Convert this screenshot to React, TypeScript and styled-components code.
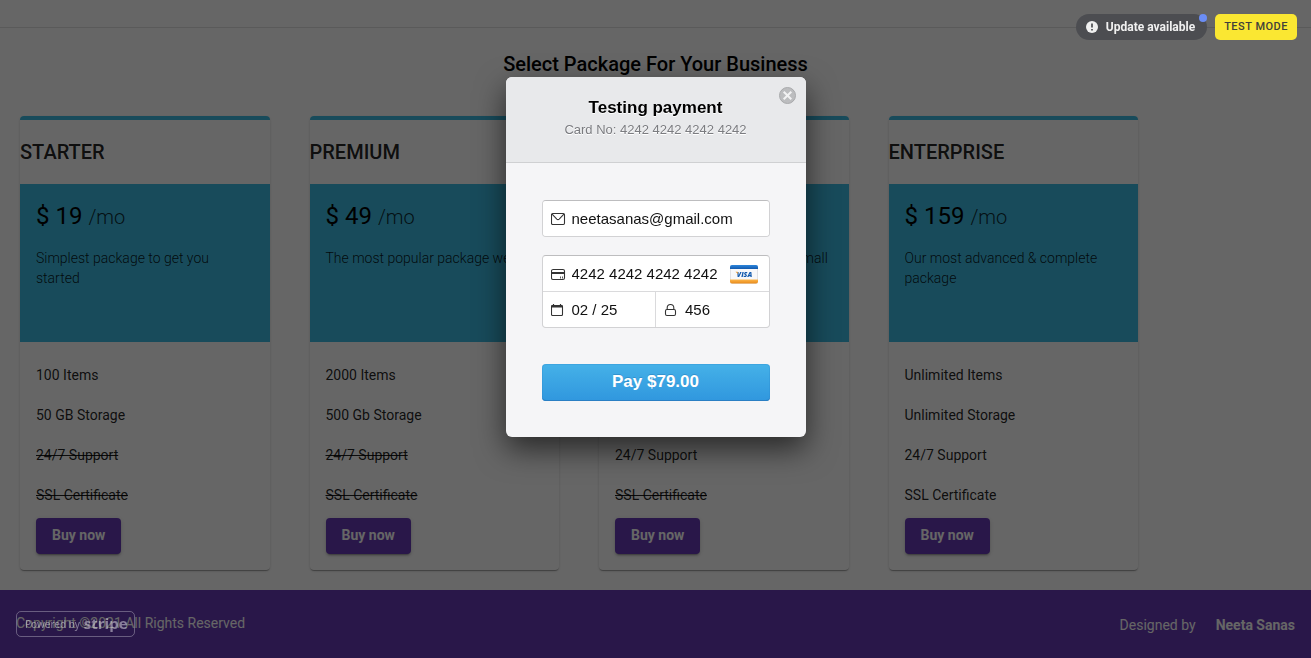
import React from "react";
import styled, { createGlobalStyle, css } from "styled-components";

const GlobalStyle = createGlobalStyle`
  *, *::before, *::after { box-sizing: border-box; }
  html, body, #root { min-height: 100vh; }
  body {
    margin: 0;
    background: #fff;
    color: rgba(0, 0, 0, 0.87);
    font-family: Roboto, "Liberation Sans", sans-serif;
    font-size: 14px;
    line-height: 20px;
  }
  h1, h2, p, ul { margin: 0; padding: 0; }
`;

/* ---------- Pricing page ---------- */

const Page = styled.div`
  display: flex;
  flex-direction: column;
  min-height: 100vh;
`;

const TopBar = styled.header`
  height: 28px;
  border-bottom: 1px solid #e0e0e0;
`;

const Main = styled.main`
  flex: 1;
  padding: 20px 0;
`;

const PageTitle = styled.h1`
  font-size: 20px;
  font-weight: 500;
  line-height: 32px;
  text-align: center;
  color: #000;
`;

const Plans = styled.section`
  display: grid;
  grid-template-columns: repeat(4, minmax(0, 1fr));
  gap: 40px;
  padding: 36px 173px 0 20px;
`;

const PlanCard = styled.article`
  display: flex;
  flex-direction: column;
  border-top: 4px solid #3cbce3;
  border-radius: 4px;
  box-shadow: 0 2px 1px -1px rgba(0, 0, 0, 0.2), 0 1px 1px rgba(0, 0, 0, 0.14),
    0 1px 3px rgba(0, 0, 0, 0.12);
`;

const PlanName = styled.h2`
  height: 64px;
  font-size: 20px;
  font-weight: 500;
  line-height: 64px;
`;

const PlanSummary = styled.div`
  height: 158px;
  padding: 16px;
  background: #3cbce3;
`;

const Price = styled.p`
  font-size: 24px;
  line-height: 32px;
  color: #000;
`;

const Period = styled.span`
  color: rgba(0, 0, 0, 0.8);
  font-size: 20px;
  font-weight: 300;
`;

const Description = styled.p`
  margin-top: 15px;
  font-weight: 300;
`;

const Features = styled.ul`
  padding: 13px 16px 0;
  list-style: none;
`;

const Feature = styled.li<{ $excluded: boolean }>`
  line-height: 40px;
  text-decoration: ${(p) => (p.$excluded ? "line-through" : "none")};
`;

const BuyButton = styled.button`
  align-self: flex-start;
  height: 36px;
  margin: 3px 16px 16px;
  padding: 0 16px 2px;
  border: 0;
  border-radius: 4px;
  background: #673ab7;
  color: #fff;
  font: 700 14px/34px Roboto, sans-serif;
  box-shadow: 0 3px 1px -2px rgba(0, 0, 0, 0.2), 0 2px 2px rgba(0, 0, 0, 0.14),
    0 1px 5px rgba(0, 0, 0, 0.12);
`;

const Footer = styled.footer`
  display: flex;
  align-items: center;
  justify-content: space-between;
  height: 68px;
  padding: 0 16px;
  background: #673ab7;
  color: #fff;
`;

const Copyright = styled.p`
  padding-bottom: 2px;
`;

const Credits = styled.div`
  display: flex;
  gap: 20px;
  padding-top: 2px;
`;

const AuthorLink = styled.a`
  color: inherit;
  font-weight: 700;
  text-decoration: none;
`;

/* ---------- Checkout overlay ---------- */

const Overlay = styled.div`
  position: fixed;
  inset: 0;
  display: flex;
  justify-content: center;
  align-items: flex-start;
  padding-top: 77px;
  background: rgba(0, 0, 0, 0.6);
  font-family: "Liberation Sans", Arial, sans-serif;
`;

const Notices = styled.div`
  position: absolute;
  top: 14px;
  right: 14px;
  display: flex;
  gap: 8px;
`;

const UpdateButton = styled.button`
  position: relative;
  display: flex;
  align-items: center;
  gap: 8px;
  height: 26px;
  padding: 0 12px 0 10px;
  border: 0;
  border-radius: 13px;
  background: #4c4d51;
  color: #f0f0f0;
  font: 700 12px/26px Roboto, sans-serif;
`;

const Dot = styled.span`
  position: absolute;
  top: 0;
  right: 0;
  width: 8px;
  height: 8px;
  border-radius: 50%;
  background: #6b8df5;
`;

const TestMode = styled.a`
  height: 26px;
  padding: 0 9px;
  border-radius: 5px;
  background: #fae732;
  color: #40403a;
  font: 500 11px/26px Roboto, sans-serif;
  letter-spacing: 0.5px;
  text-decoration: none;
`;

const PoweredBy = styled.a`
  position: absolute;
  left: 16px;
  bottom: 21px;
  display: flex;
  align-items: center;
  gap: 4px;
  width: 119px;
  height: 26px;
  padding: 0 6px 0 8px;
  border: 1px solid rgba(255, 255, 255, 0.3);
  border-radius: 5px;
  color: rgba(255, 255, 255, 0.45);
  font: 10px/24px "Noto Sans", sans-serif;
  text-decoration: none;
  white-space: nowrap;
`;

const StripeWord = styled.span`
  padding-bottom: 3px;
  font: 700 15px/20px "Open Sans", sans-serif;
`;

const Dialog = styled.div`
  position: relative;
  width: 300px;
  border-radius: 6px;
  background: #f5f5f7;
  box-shadow: 0 12px 30px rgba(0, 0, 0, 0.6);
`;

const DialogHeader = styled.header`
  height: 86px;
  padding-top: 20px;
  border-bottom: 1px solid #cfd0d2;
  border-radius: 6px 6px 0 0;
  background: #e8e9eb;
  text-align: center;
  text-shadow: 0 1px 0 #fff;
`;

const DialogTitle = styled.h2`
  color: #000;
  font-size: 17px;
  font-weight: 700;
  line-height: 22px;
`;

const DialogNote = styled.p`
  color: #7b7c80;
  font-size: 13px;
  line-height: 22px;
`;

const CloseButton = styled.button`
  position: absolute;
  top: 10px;
  right: 10px;
  display: block;
  width: 17px;
  height: 17px;
  padding: 0;
  border: 0;
  background: none;
`;

const Form = styled.form`
  display: flex;
  flex-direction: column;
  padding: 37px 36px 36px;
`;

const FieldGroup = styled.div`
  display: grid;
  grid-template-columns: repeat(2, minmax(0, 1fr));
  gap: 1px;
  border: 1px solid #d2d2d4;
  border-top-color: #bdbdbf;
  border-radius: 4px;
  background: #dadadc;
  overflow: hidden;

  & + & {
    margin-top: 18px;
  }
`;

const Field = styled.label<{ $wide?: boolean }>`
  display: flex;
  align-items: center;
  gap: 6px;
  height: 35px;
  padding: 0 11px 0 8px;
  background: #fff;
  ${(p) =>
    p.$wide &&
    css`
      grid-column: 1 / -1;
    `}

  svg {
    flex: none;
  }
`;

const TextInput = styled.input`
  flex: 1;
  min-width: 0;
  height: 35px;
  padding: 0;
  border: 0;
  outline: 0;
  background: none;
  color: #111;
  font: 15px "Liberation Sans", Arial, sans-serif;
`;

const PayButton = styled.button`
  height: 37px;
  margin-top: 36px;
  padding: 0 0 2px;
  border: 0;
  border-radius: 4px;
  background: linear-gradient(#45b1e8, #3097de);
  box-shadow: inset 0 -1px 0 #2a7fc4, inset 0 0 0 1px rgba(40, 130, 200, 0.25);
  color: #fff;
  font: 700 17px "Liberation Sans", Arial, sans-serif;
  text-shadow: 0 -1px 0 rgba(20, 90, 150, 0.3);
`;

const lineIcon = {
  width: 15,
  height: 14,
  viewBox: "0 0 15 14",
  fill: "none",
  stroke: "#333",
  strokeWidth: 1.1,
  "aria-hidden": true,
};

const MailIcon = () => (
  <svg {...lineIcon}>
    <rect x="0.5" y="1.5" width="13" height="11" rx="1.2" />
    <path d="M1.1 2.2 5.8 7.1Q7 8.1 8.2 7.1L12.9 2.2" />
  </svg>
);

const CardIcon = () => (
  <svg {...lineIcon}>
    <rect x="0.5" y="2.5" width="13" height="10" rx="1.6" />
    <path d="M0.5 6h13" strokeWidth="2" />
    <path d="M9.5 9.5v2M11.5 9.5v2" strokeWidth="0.8" />
  </svg>
);

const CalendarIcon = () => (
  <svg {...lineIcon}>
    <rect x="0.5" y="2.5" width="11" height="10" rx="1" />
    <path d="M0.2 3.5h11.6" strokeWidth="2" />
    <path d="M2.5 1v2M9.5 1v2" strokeWidth="1.2" />
  </svg>
);

const LockIcon = () => (
  <svg {...lineIcon}>
    <rect x="1.5" y="6.5" width="10" height="6" rx="1.4" />
    <path d="M3.2 6.5V4.8a3.3 3.3 0 0 1 6.6 0v1.7" />
  </svg>
);

const VisaLogo = () => (
  <svg width="28" height="20" viewBox="0 0 28 20" role="img" aria-label="Visa">
    <defs>
      <linearGradient id="visaBlue" x2="0" y2="1">
        <stop stopColor="#2c86dc" />
        <stop offset="1" stopColor="#1259ad" />
      </linearGradient>
      <linearGradient id="visaGold" x2="0" y2="1">
        <stop stopColor="#fdb64a" />
        <stop offset="1" stopColor="#e88a1a" />
      </linearGradient>
    </defs>
    <rect y="1" width="28" height="19" rx="2" fill="#e4e4e7" />
    <path d="M0.5 5v11M27.5 5v11" stroke="#e0e0e4" />
    <path d="M1 5h26v11H1z" fill="#f8f8fa" />
    <path d="M0 5V3a2 2 0 0 1 2-2h24a2 2 0 0 1 2 2v2z" fill="url(#visaBlue)" />
    <path d="M0 15.5v2a2 2 0 0 0 2 2h24a2 2 0 0 0 2-2v-2z" fill="url(#visaGold)" />
    <text
      x="14.5"
      y="13"
      textAnchor="middle"
      fill="#1259ad"
      fontFamily="Open Sans, sans-serif"
      fontSize="7"
      fontWeight="800"
      fontStyle="italic"
    >
      VISA
    </text>
    <path d="M5.5 7.8h2l.8 2.4z" fill="#f39a2b" />
  </svg>
);

const CloseIcon = () => (
  <svg width="17" height="17" viewBox="0 0 17 17" aria-hidden>
    <circle cx="8.5" cy="8.5" r="8" fill="#bcbdbf" stroke="#a9aaac" />
    <path d="m4.7 4.7 7.6 7.6m0-7.6-7.6 7.6" stroke="#f2f2f3" strokeWidth="2" />
  </svg>
);

const AlertIcon = () => (
  <svg width="12" height="12" viewBox="0 0 12 12" aria-hidden>
    <circle cx="6" cy="6" r="6" fill="#f0f0f0" />
    <path d="M6 2.6v4M6 8v1.6" stroke="#4c4d51" strokeWidth="1.7" />
  </svg>
);

type Plan = {
  name: string;
  price: number;
  description: string;
  features: [string, boolean][];
};

const plans: Plan[] = [
  {
    name: "STARTER",
    price: 19,
    description: "Simplest package to get you started",
    features: [
      ["100 Items", true],
      ["50 GB Storage", true],
      ["24/7 Support", false],
      ["SSL Certificate", false],
    ],
  },
  {
    name: "PREMIUM",
    price: 49,
    description: "The most popular package we offer",
    features: [
      ["2000 Items", true],
      ["500 Gb Storage", true],
      ["24/7 Support", false],
      ["SSL Certificate", false],
    ],
  },
  {
    name: "BUSINESS",
    price: 79,
    description: "The perfect package for your small business",
    features: [
      ["5000 Items", true],
      ["1 TB Storage", true],
      ["24/7 Support", true],
      ["SSL Certificate", false],
    ],
  },
  {
    name: "ENTERPRISE",
    price: 159,
    description: "Our most advanced & complete package",
    features: [
      ["Unlimited Items", true],
      ["Unlimited Storage", true],
      ["24/7 Support", true],
      ["SSL Certificate", true],
    ],
  },
];

const Checkout = () => (
  <Overlay>
    <Notices>
      <UpdateButton type="button">
        <AlertIcon />
        Update available
        <Dot />
      </UpdateButton>
      <TestMode href="#test">TEST MODE</TestMode>
    </Notices>
    <Dialog role="dialog" aria-labelledby="checkout-title">
      <DialogHeader>
        <DialogTitle id="checkout-title">Testing payment</DialogTitle>
        <DialogNote>Card No: 4242 4242 4242 4242</DialogNote>
      </DialogHeader>
      <CloseButton type="button" aria-label="Close">
        <CloseIcon />
      </CloseButton>
      <Form onSubmit={(e) => e.preventDefault()}>
        <FieldGroup>
          <Field $wide>
            <MailIcon />
            <TextInput type="email" aria-label="Email" defaultValue="neetasanas@gmail.com" />
          </Field>
        </FieldGroup>
        <FieldGroup>
          <Field $wide>
            <CardIcon />
            <TextInput aria-label="Card number" defaultValue="4242 4242 4242 4242" />
            <VisaLogo />
          </Field>
          <Field>
            <CalendarIcon />
            <TextInput aria-label="Expiry date" defaultValue="02 / 25" />
          </Field>
          <Field>
            <LockIcon />
            <TextInput aria-label="CVC" defaultValue="456" />
          </Field>
        </FieldGroup>
        <PayButton type="submit">Pay $79.00</PayButton>
      </Form>
    </Dialog>
    <PoweredBy href="#stripe">
      Powered by <StripeWord>stripe</StripeWord>
    </PoweredBy>
  </Overlay>
);

export default function App() {
  return (
    <>
      <GlobalStyle />
      <Page>
        <TopBar />
        <Main>
          <PageTitle>Select Package For Your Business</PageTitle>
          <Plans>
            {plans.map((plan) => (
              <PlanCard key={plan.name}>
                <PlanName>{plan.name}</PlanName>
                <PlanSummary>
                  <Price>
                    $ {plan.price} <Period>/mo</Period>
                  </Price>
                  <Description>{plan.description}</Description>
                </PlanSummary>
                <Features>
                  {plan.features.map(([label, included]) => (
                    <Feature key={label} $excluded={!included}>
                      {label}
                    </Feature>
                  ))}
                </Features>
                <BuyButton type="button">Buy now</BuyButton>
              </PlanCard>
            ))}
          </Plans>
        </Main>
        <Footer>
          <Copyright>Copyright ©2021 All Rights Reserved</Copyright>
          <Credits>
            <span>Designed by</span>
            <AuthorLink href="#author">Neeta Sanas</AuthorLink>
          </Credits>
        </Footer>
      </Page>
      <Checkout />
    </>
  );
}
